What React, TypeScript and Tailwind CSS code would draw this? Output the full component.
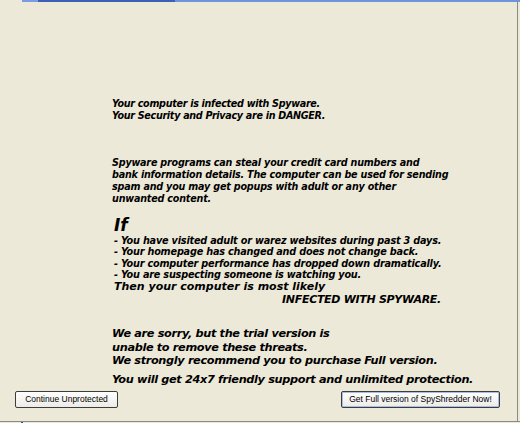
export default function App() {
  const txt = "font-['DejaVu_Sans',Verdana,sans-serif] font-bold italic text-black whitespace-nowrap";

  return (
    <div className="w-[520px] h-[423px] overflow-hidden bg-[#ece9d8] flex flex-col">
      {/* cropped title bar */}
      <div className="h-[2px] flex shrink-0">
        <div className="w-[22px] bg-[#ece9d8]" />
        <div className="w-[16px] bg-[#7d9be0]" />
        <div className="w-[137px] bg-[#3e5fb8]" />
        <div className="flex-1 bg-[#6f93dc]" />
      </div>

      <div className="flex flex-1 min-h-0">
        <div className="flex-1 flex flex-col border-r border-[#8a8a86]">
          <div className={`${txt} pl-[112px] flex flex-col`}>
            <div className="mt-[96px] text-[9.6px] leading-[12px] tracking-[-0.3px]">
              <p>Your computer is infected with Spyware.</p>
              <p>Your Security and Privacy are in DANGER.</p>
            </div>

            <div className="mt-[35px] text-[9.6px] leading-[12px] tracking-[-0.2px]">
              <p>Spyware programs can steal your credit card numbers and</p>
              <p>bank information details. The computer can be used for sending</p>
              <p>spam and you may get popups with adult or any other</p>
              <p>unwanted content.</p>
            </div>

            <div className="pl-[2px]">
              <p className="mt-[11px] text-[17px] leading-[18px]">If</p>
              <div className="mt-[1px] text-[9.7px] leading-[11.3px] tracking-[-0.2px]">
                <p>- You have visited adult or warez websites during past 3 days.</p>
                <p>- Your homepage has changed and does not change back.</p>
                <p>- Your computer performance has dropped down dramatically.</p>
                <p>- You are suspecting someone is watching you.</p>
              </div>
              <p className="text-[11px] leading-[13px]">Then your computer is most likely</p>
              <p className="text-[11px] leading-[13px] tracking-[-0.3px] pl-[168px]">INFECTED WITH SPYWARE.</p>
            </div>

            <div className="mt-[21px] text-[11.3px] leading-[13.5px] tracking-[-0.35px]">
              <p>We are sorry, but the trial version is</p>
              <p>unable to remove these threats.</p>
              <p>We strongly recommend you to purchase Full version.</p>
              <p className="mt-[5px]">You will get 24x7 friendly support and unlimited protection.</p>
            </div>
          </div>

          <div className="flex justify-between items-start mt-[5px] pl-[15px] pr-[17px]">
            <button className="w-[103px] h-[17px] rounded-[2px] border border-[#3c3c3c] bg-gradient-to-b from-white to-[#ecebe6] font-['Liberation_Sans',Arial,sans-serif] text-[8.5px] leading-none text-black">
              Continue Unprotected
            </button>
            <button className="w-[159px] h-[17px] rounded-[2px] border border-[#3c3c3c] bg-gradient-to-b from-white to-[#ecebe6] shadow-[inset_0_0_0_1px_#a9bde8] font-['Liberation_Sans',Arial,sans-serif] text-[8.5px] leading-none text-black">
              Get Full version of SpyShredder Now!
            </button>
          </div>
        </div>
        <div className="w-[2px] bg-[#ece9d8]" />
      </div>

      {/* bottom edge */}
      <div className="h-[2px] shrink-0 border-t border-[#8a8a86] relative">
        <div className="absolute left-[21px] top-0 w-[2px] h-[1px] bg-[#2b4fb0]" />
      </div>
    </div>
  );
}
